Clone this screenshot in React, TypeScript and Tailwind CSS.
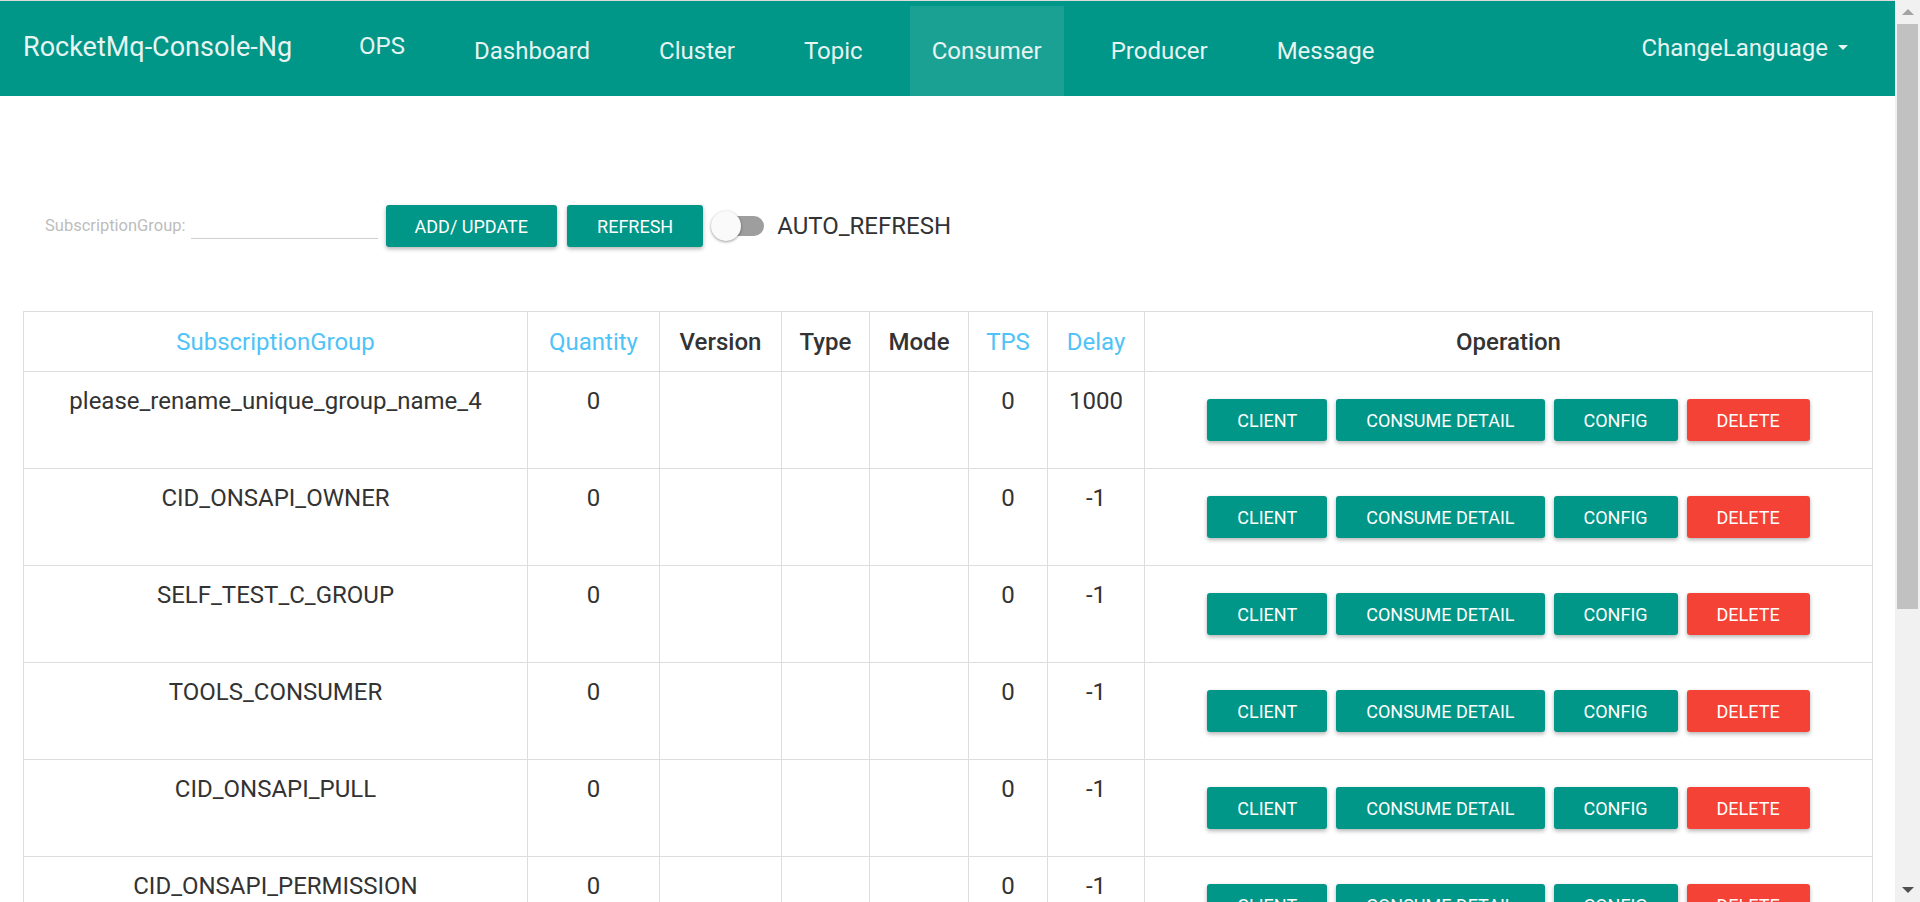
import { useState } from "react";

const navItems = ["Dashboard", "Cluster", "Topic", "Consumer", "Producer", "Message"];

const rows = [
  { name: "please_rename_unique_group_name_4", qty: 0, tps: 0, delay: 1000 },
  { name: "CID_ONSAPI_OWNER", qty: 0, tps: 0, delay: -1 },
  { name: "SELF_TEST_C_GROUP", qty: 0, tps: 0, delay: -1 },
  { name: "TOOLS_CONSUMER", qty: 0, tps: 0, delay: -1 },
  { name: "CID_ONSAPI_PULL", qty: 0, tps: 0, delay: -1 },
  { name: "CID_ONSAPI_PERMISSION", qty: 0, tps: 0, delay: -1 },
  { name: "CID_ONS-HTTP-PROXY", qty: 0, tps: 0, delay: -1 },
];

const Header = () => {
  return (
    <div className="h-[96px] shrink-0 border-t border-[#dcdcdc] bg-[#009688] flex text-[#e6f4f2]">
      <div className="pl-[23px] mr-[45px] h-full flex items-center pb-[2px] text-[27px]">
        RocketMq-Console-Ng
      </div>
      <div className="px-[22px] h-full flex items-center pb-[6px] text-[24px]">OPS</div>
      <div className="flex gap-[25px] ml-[25px] self-end h-[90px]">
        {navItems.map((item) => (
          <div
            key={item}
            className={
              "px-[22px] flex items-center text-[24px] " +
              (item === "Consumer" ? "bg-white/10" : "")
            }
          >
            {item}
          </div>
        ))}
      </div>
      <div className="ml-auto mr-[47px] flex items-center gap-[10px] pb-[2px] text-[24px]">
        ChangeLanguage
        <span className="w-0 h-0 border-l-[5px] border-r-[5px] border-t-[5px] border-l-transparent border-r-transparent border-t-[#e6f4f2]" />
      </div>
    </div>
  );
};

const Toolbar = () => {
  const [auto, setAuto] = useState(false);
  return (
    <div className="mt-[109px] pl-[22px] h-[42px] flex items-center">
      <span className="text-[16.5px] text-[#bdbdbd]">SubscriptionGroup:</span>
      <input className="ml-[5px] w-[187px] h-[26px] border-b border-[#cfcfcf] outline-none text-[17px]" />
      <button className="ml-[8px] h-[42px] px-[29px] rounded-[3px] bg-[#009688] text-white text-[18px] shadow-[0_2px_4px_rgba(0,0,0,0.3)]">
        ADD/ UPDATE
      </button>
      <button className="ml-[10px] h-[42px] px-[30px] rounded-[3px] bg-[#009688] text-white text-[18px] shadow-[0_2px_4px_rgba(0,0,0,0.3)]">
        REFRESH
      </button>
      <div
        className="relative ml-[8px] w-[53px] h-[30px] flex items-center cursor-pointer"
        onClick={() => setAuto(!auto)}
      >
        <div className="ml-[4px] w-[49px] h-[20px] rounded-full bg-[#9e9e9e]" />
        <div className="absolute left-0 top-0 w-[30px] h-[30px] rounded-full bg-[#fafafa] shadow-[0_1px_3px_rgba(0,0,0,0.4)]" />
      </div>
      <span className="ml-[13px] text-[24px] text-[#333]">AUTO_REFRESH</span>
    </div>
  );
};

const OpButton = ({ label, danger }: { label: string; danger?: boolean }) => (
  <button
    className={
      "h-[42px] px-[30px] rounded-[3px] text-white text-[18px] shadow-[0_2px_4px_rgba(0,0,0,0.3)] " +
      (danger ? "bg-[#f44336]" : "bg-[#009688]")
    }
  >
    {label}
  </button>
);

const ConsumerTable = () => {
  const th = "border border-[#dddddd] pt-[16px] pb-[15px] px-2 text-[24px] leading-[28px] text-center";
  const td = "border border-[#dddddd] align-top pt-[15px] px-2 text-[24px] leading-[28px] text-center text-[#333]";
  return (
    <table className="mt-[64px] w-[1849px] table-fixed border-collapse border border-[#dddddd]">
      <colgroup>
        <col className="w-[504px]" />
        <col className="w-[132px]" />
        <col className="w-[122px]" />
        <col className="w-[88px]" />
        <col className="w-[99px]" />
        <col className="w-[79px]" />
        <col className="w-[97px]" />
        <col className="w-[728px]" />
      </colgroup>
      <thead>
        <tr>
          <th className={th + " font-normal text-[#4fc3f7]"}>SubscriptionGroup</th>
          <th className={th + " font-normal text-[#4fc3f7]"}>Quantity</th>
          <th className={th + " font-medium text-[#333]"}>Version</th>
          <th className={th + " font-medium text-[#333]"}>Type</th>
          <th className={th + " font-medium text-[#333]"}>Mode</th>
          <th className={th + " font-normal text-[#4fc3f7]"}>TPS</th>
          <th className={th + " font-normal text-[#4fc3f7]"}>Delay</th>
          <th className={th + " font-medium text-[#333]"}>Operation</th>
        </tr>
      </thead>
      <tbody>
        {rows.map((r) => (
          <tr key={r.name}>
            <td className={td}>{r.name}</td>
            <td className={td}>{r.qty}</td>
            <td className={td}></td>
            <td className={td}></td>
            <td className={td}></td>
            <td className={td}>{r.tps}</td>
            <td className={td}>{r.delay}</td>
            <td className="border border-[#dddddd] py-[27px]">
              <div className="flex justify-center gap-[9px]">
                <OpButton label="CLIENT" />
                <OpButton label="CONSUME DETAIL" />
                <OpButton label="CONFIG" />
                <OpButton label="DELETE" danger />
              </div>
            </td>
          </tr>
        ))}
      </tbody>
    </table>
  );
};

const Scrollbar = () => (
  <div className="w-[25px] shrink-0 bg-[#f1f1f1] flex flex-col items-center">
    <div className="h-[24px] flex items-center justify-center">
      <span className="w-0 h-0 border-l-[6px] border-r-[6px] border-b-[6px] border-l-transparent border-r-transparent border-b-[#a3a3a3]" />
    </div>
    <div className="w-[21px] h-[585px] bg-[#c1c1c1]" />
    <div className="flex-1" />
    <div className="h-[24px] flex items-center justify-center">
      <span className="w-0 h-0 border-l-[6px] border-r-[6px] border-t-[6px] border-l-transparent border-r-transparent border-t-[#505050]" />
    </div>
  </div>
);

export default function App() {
  return (
    <div className="h-screen w-full flex overflow-hidden bg-white font-['Roboto',sans-serif]">
      <div className="flex-1 flex flex-col overflow-hidden">
        <Header />
        <div className="px-[23px]">
          <Toolbar />
          <ConsumerTable />
        </div>
      </div>
      <Scrollbar />
    </div>
  );
}
